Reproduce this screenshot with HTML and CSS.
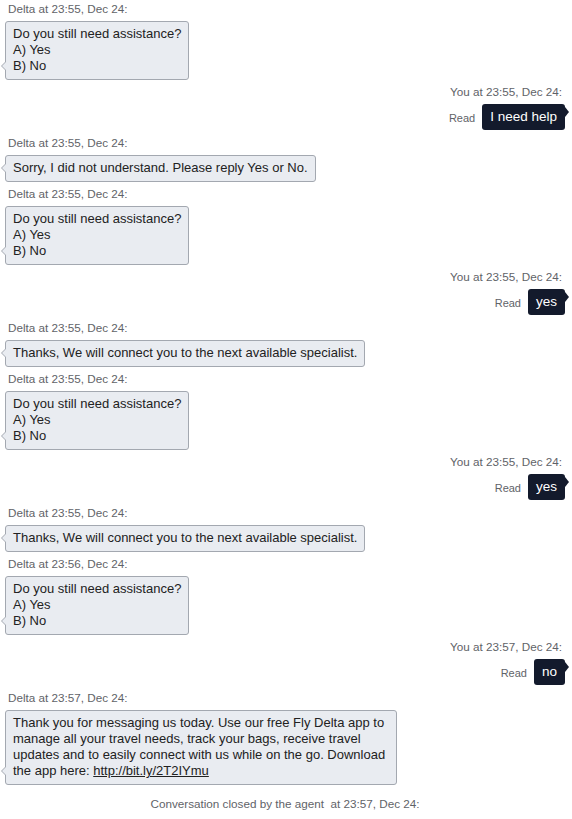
FILE: index.html
```html
<!DOCTYPE html>
<html lang="en">
<head>
  <meta charset="UTF-8" />
  <meta name="viewport" content="width=device-width, initial-scale=1.0" />
  <title>Chat transcript</title>
  <link rel="stylesheet" href="styles.css">
</head>
<body>
  <div id="chat">
    <div class="msg agent">
      <div class="meta">Delta at 23:55, Dec 24:</div>
      <div class="bubble">Do you still need assistance?<br>A) Yes<br>B) No</div>
    </div>

    <div class="msg user">
      <div class="meta">You at 23:55, Dec 24:</div>
      <div class="row">
        <span class="read">Read</span>
        <div class="bubble">I need help</div>
      </div>
    </div>

    <div class="msg agent">
      <div class="meta">Delta at 23:55, Dec 24:</div>
      <div class="bubble">Sorry, I did not understand. Please reply Yes or No.</div>
    </div>

    <div class="msg agent">
      <div class="meta">Delta at 23:55, Dec 24:</div>
      <div class="bubble">Do you still need assistance?<br>A) Yes<br>B) No</div>
    </div>

    <div class="msg user">
      <div class="meta">You at 23:55, Dec 24:</div>
      <div class="row">
        <span class="read">Read</span>
        <div class="bubble">yes</div>
      </div>
    </div>

    <div class="msg agent">
      <div class="meta">Delta at 23:55, Dec 24:</div>
      <div class="bubble">Thanks, We will connect you to the next available specialist.</div>
    </div>

    <div class="msg agent">
      <div class="meta">Delta at 23:55, Dec 24:</div>
      <div class="bubble">Do you still need assistance?<br>A) Yes<br>B) No</div>
    </div>

    <div class="msg user">
      <div class="meta">You at 23:55, Dec 24:</div>
      <div class="row">
        <span class="read">Read</span>
        <div class="bubble">yes</div>
      </div>
    </div>

    <div class="msg agent">
      <div class="meta">Delta at 23:55, Dec 24:</div>
      <div class="bubble">Thanks, We will connect you to the next available specialist.</div>
    </div>

    <div class="msg agent">
      <div class="meta">Delta at 23:56, Dec 24:</div>
      <div class="bubble">Do you still need assistance?<br>A) Yes<br>B) No</div>
    </div>

    <div class="msg user">
      <div class="meta">You at 23:57, Dec 24:</div>
      <div class="row">
        <span class="read">Read</span>
        <div class="bubble">no</div>
      </div>
    </div>

    <div class="msg agent">
      <div class="meta">Delta at 23:57, Dec 24:</div>
      <div class="bubble">Thank you for messaging us today. Use our free Fly Delta app to manage all your travel needs, track your bags, receive travel updates and to easily connect with us while on the go. Download the app here: <a href="#">http://bit.ly/2T2IYmu</a></div>
    </div>

    <div class="closed">Conversation closed by the agent &nbsp;at 23:57, Dec 24:</div>
  </div>
</body>
</html>
```

FILE: styles.css
```css
body {
  margin: 0;
  padding: 0;
  background: #fff;
  color: #222;
  font-family: "Liberation Sans", Arial, sans-serif;
}

#chat {
  padding: 2px 7px 0 5px;
}

.msg {
  display: flex;
  flex-direction: column;
  margin-bottom: 5px;
}

.meta {
  font-size: 11.7px;
  line-height: 14px;
  color: #5f6368;
  margin-bottom: 5px;
}

.bubble {
  position: relative;
  box-sizing: border-box;
  font-size: 13px;
  line-height: 16px;
  padding: 4px 7px 5px 7px;
  border-radius: 3px;
}

/* agent side */
.agent {
  align-items: flex-start;
}

.agent .meta {
  margin-left: 3px;
}

.agent .bubble {
  background: #e9ecf1;
  border: 1px solid #a3a8b0;
  max-width: 392px;
}

.agent .bubble::before,
.agent .bubble::after {
  content: "";
  position: absolute;
  width: 0;
  height: 0;
  border-style: solid;
  border-color: transparent;
  bottom: 8px;
  border-width: 5px 5px 5px 0;
}

.agent .bubble::before {
  left: -5px;
  border-right-color: #a3a8b0;
}

.agent .bubble::after {
  left: -4px;
  border-right-color: #e9ecf1;
}

.agent .bubble a {
  color: #222;
}

/* user side */
.user {
  align-items: flex-end;
  margin-top: 1px;
  margin-bottom: 6px;
}

.user .meta {
  margin-right: 3px;
}

.row {
  display: flex;
  align-items: flex-end;
  gap: 7px;
}

.read {
  font-size: 11px;
  line-height: 13px;
  color: #5f6368;
  margin-bottom: 5px;
}

.user .bubble {
  background: #131a2c;
  color: #fff;
  font-size: 13.5px;
  padding: 5px 8px;
}

.user .bubble::after {
  content: "";
  position: absolute;
  right: -4px;
  top: 3px;
  border-style: solid;
  border-color: transparent;
  border-width: 5px 0 5px 4px;
  border-left-color: #131a2c;
}

.agent:last-of-type .bubble {
  padding-bottom: 6px;
}

.closed {
  text-align: center;
  font-size: 11.7px;
  line-height: 14px;
  color: #5f6368;
  margin-top: 12px;
}
```
